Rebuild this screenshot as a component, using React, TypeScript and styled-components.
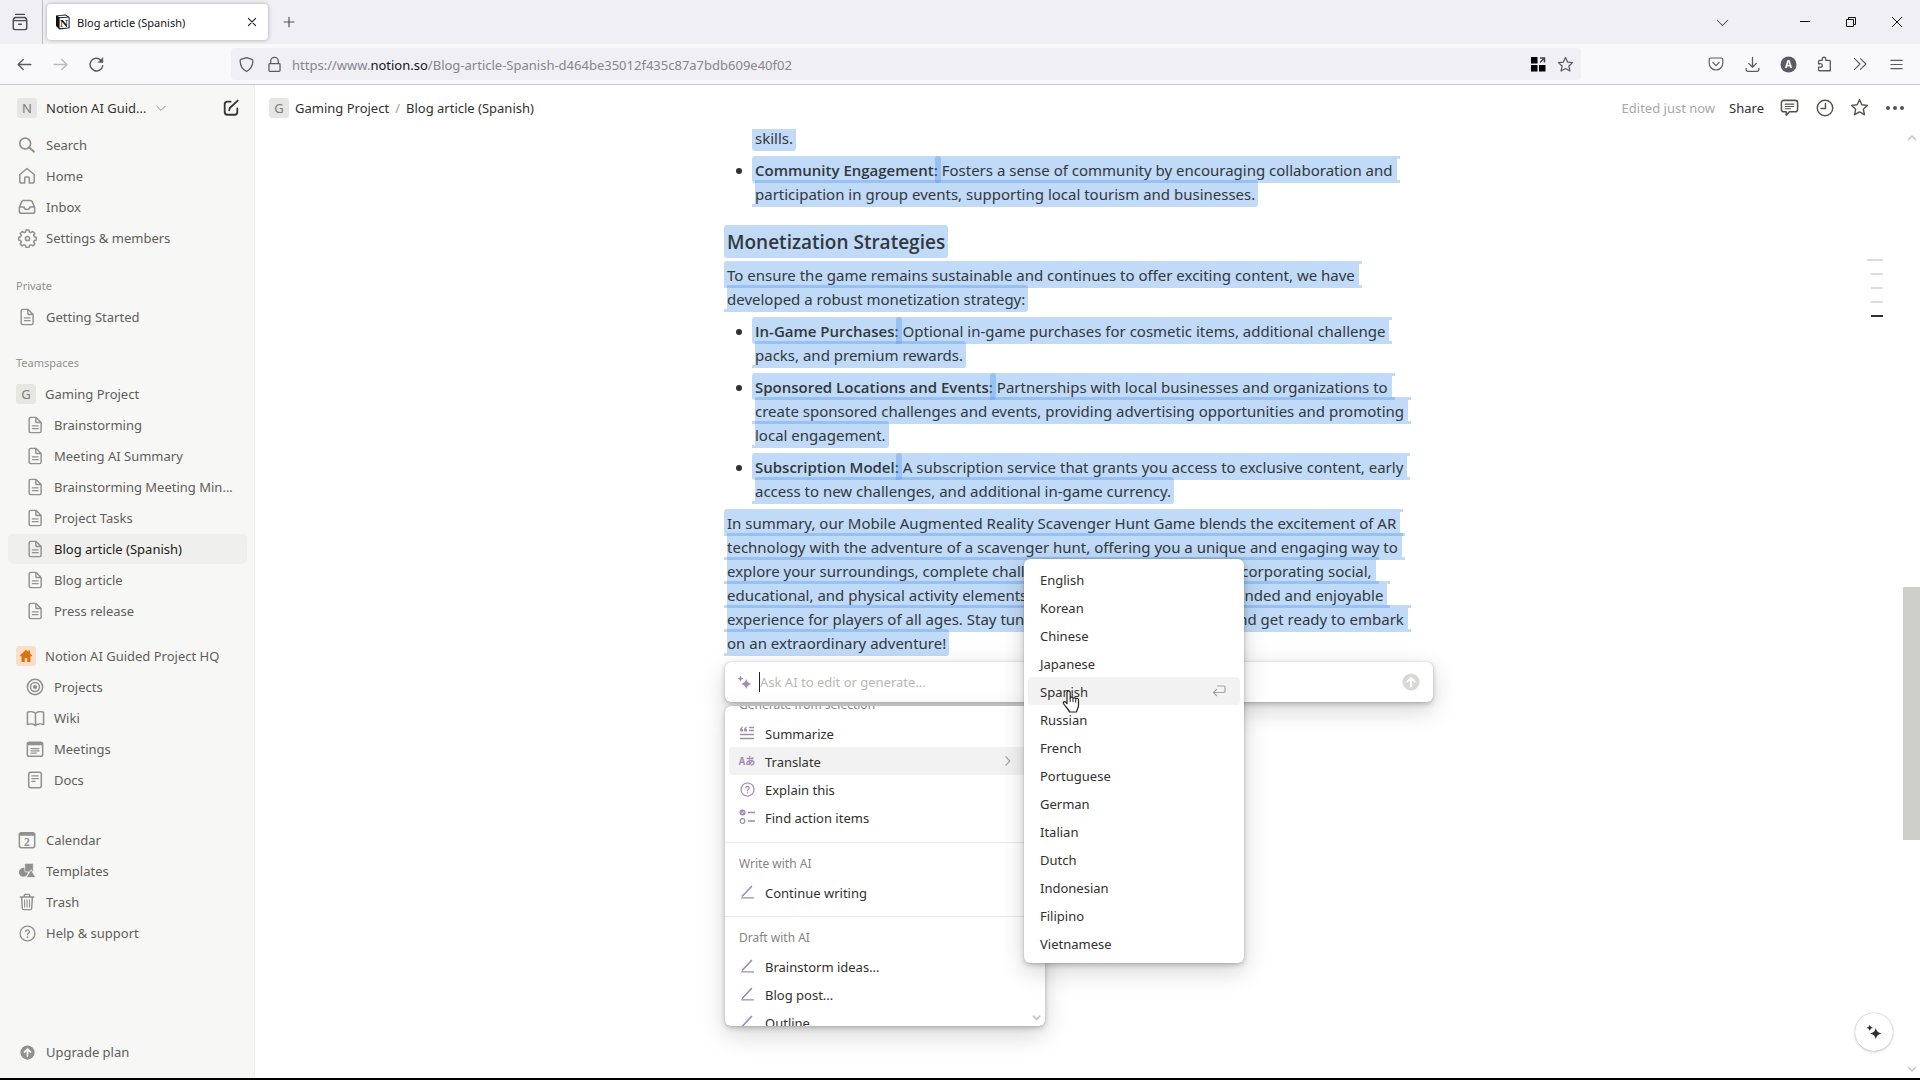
import React from 'react';
import styled, { createGlobalStyle, css } from 'styled-components';

const GlobalStyle = createGlobalStyle`
  *, *::before, *::after { box-sizing: border-box; }
  body {
    margin: 0;
    background: #fff;
    color: #32302c;
    font-family: "Noto Sans", "Open Sans", "Noto Sans CJK JP", sans-serif;
    font-size: 13px;
  }
  button, input { font: inherit; color: inherit; background: none; border: 0; padding: 0; margin: 0; }
  button { cursor: pointer; }
  a { color: inherit; text-decoration: none; }
  ul, p, h3 { margin: 0; padding: 0; list-style: none; }
  svg { display: block; flex: none; }
`;

/* ---------- window ---------- */

const Window = styled.div`
  display: flex;
  flex-direction: column;
  height: 100vh;
  overflow: hidden;
  border-bottom: 2px solid #000;
`;

const TabStrip = styled.header`
  display: flex;
  align-items: stretch;
  height: 44px;
  background: #f0eff4;
  color: #4d4c55;
`;

const IconButton = styled.button<{ $w?: number; $faded?: boolean }>`
  display: inline-flex;
  align-items: center;
  justify-content: center;
  flex: none;
  width: ${p => p.$w ?? 36}px;
  opacity: ${p => (p.$faded ? 0.4 : 1)};
`;

const ViewSlot = styled.div`
  display: flex;
  width: 43px;
  border-right: 1px solid #bdbcc4;
`;

const Tab = styled.div`
  display: flex;
  align-items: center;
  gap: 7px;
  width: 221px;
  margin: 4px 3px 4px 4px;
  padding: 0 4px 0 9px;
  border-radius: 4px;
  background: #fff;
  box-shadow: 0 0 4px rgba(0, 0, 0, 0.3);
  color: #15141a;
  font-size: 11px;
`;

const TabTitle = styled.span`
  flex: 1;
  white-space: nowrap;
`;

const WindowControls = styled.div`
  display: flex;
  gap: 40px;
  margin-left: auto;
  & > div { display: flex; color: #111; }
`;

const Toolbar = styled.div`
  display: flex;
  align-items: stretch;
  gap: 117px;
  height: 41px;
  padding: 0 6px;
  background: #f9f9fb;
  border-bottom: 1px solid #c9c9cf;
  color: #5b5b66;
`;

const ToolGroup = styled.div`
  display: flex;
`;

const AddressBar = styled.div`
  display: flex;
  flex: 1;
  align-items: center;
  gap: 11px;
  margin: 4px 0;
  padding: 0 7px;
  border-radius: 4px;
  background: #f0eff4;
`;

const Address = styled.a`
  flex: 1;
  margin-left: -2px;
  padding-top: 1px;
  color: #85858d;
  white-space: nowrap;
  b { font-weight: 400; color: #15141a; }
`;

const Workspace = styled.div`
  display: flex;
  flex: 1;
  min-height: 0;
`;

/* ---------- sidebar ---------- */

const Sidebar = styled.nav`
  display: flex;
  flex-direction: column;
  flex: none;
  width: 255px;
  padding: 8px 7px 11px 8px;
  background: #f7f7f5;
  border-right: 1px solid #eeeeec;
  color: #5f5e5b;
`;

const SideHeader = styled.div`
  display: flex;
  align-items: center;
  height: 30px;
  margin-bottom: 7px;
  padding-left: 9px;
  color: #373530;
`;

const SwitcherButton = styled.button`
  display: flex;
  flex: 1;
  align-items: center;
  gap: 9px;
  svg { color: #91918e; }
`;

const Badge = styled.span<{ $warm?: boolean }>`
  display: inline-flex;
  align-items: center;
  justify-content: center;
  flex: none;
  width: 20px;
  height: 20px;
  border-radius: 3px;
  background: ${p => (p.$warm ? '#fadec9' : '#e6e7e3')};
  color: #7d7c78;
  line-height: 20px;
`;

const SideList = styled.ul<{ $gap?: number }>`
  display: flex;
  flex-direction: column;
  gap: 1px;
  margin-top: ${p => p.$gap ?? 0}px;
`;

const SideLabel = styled.li`
  padding-left: 8px;
  color: #91918e;
  font-size: 11px;
  line-height: 30px;
`;

const SideLink = styled.a<{ $depth?: number; $active?: boolean }>`
  display: flex;
  align-items: center;
  gap: 9px;
  height: 30px;
  padding-left: ${p => (p.$depth === 0 ? 8 : p.$depth === 2 ? 17 : 9)}px;
  border-radius: 5px;
  white-space: nowrap;
  ${p => p.$active && css`
    background: #efefed;
    color: #1d1b16;
  `}
`;

const SideIcon = styled.span`
  display: inline-flex;
  justify-content: center;
  flex: none;
  width: 20px;
  color: #91918e;
`;

const Spacer = styled.div`
  flex: 1;
`;

/* ---------- page ---------- */

const Page = styled.main`
  position: relative;
  display: flex;
  flex: 1;
  flex-direction: column;
  min-width: 0;
`;

const TopBar = styled.div`
  display: flex;
  align-items: center;
  flex: none;
  height: 44px;
  padding: 1px 8px 0 14px;
`;

const Crumbs = styled.div`
  display: flex;
  flex: 1;
  align-items: center;
  gap: 6px;
  i { font-style: normal; color: #a09f9b; }
`;

const Edited = styled.span`
  margin-right: 14px;
  color: #a9a8a4;
`;

const ShareButton = styled.button`
  margin-right: 8px;
`;

const PageActions = styled.div`
  display: flex;
  color: #55534e;
`;

const ScrollArea = styled.div`
  display: flex;
  flex: 1;
  min-height: 0;
`;

const Document = styled.article`
  flex: 1;
  overflow: hidden;
`;

const Column = styled.div`
  display: flex;
  flex-direction: column;
  gap: 8px;
  width: 708px;
  margin: -3px auto 0;
  padding: 0 2px;
  font-size: 15px;
  color: #32383c;
`;

const Bullet = styled.li<{ $continued?: boolean }>`
  display: flex;
  &::before {
    content: "";
    width: 6px;
    height: 6px;
    margin: 10px 13px 0 9px;
    border-radius: 50%;
    background: ${p => (p.$continued ? 'transparent' : '#32302c')};
  }
`;

const BulletList = styled.ul`
  display: flex;
  flex-direction: column;
  gap: 8px;
`;

const Line = styled.span`
  display: block;
  height: 24px;
  line-height: 24px;
  white-space: pre;
`;

const Heading = styled.h3`
  height: 28px;
  margin-top: 13px;
  font: 600 19px "Open Sans", sans-serif;
  line-height: 30px;
`;

const tint = 'rgba(69, 147, 232, 0.34)';

const Mark = styled.mark<{ $start?: boolean; $end?: boolean }>`
  position: relative;
  display: inline-block;
  vertical-align: top;
  margin: -2px ${p => (p.$end ? '-3px' : '0')} -1px ${p => (p.$start ? '-3px' : '0')};
  padding: 2px ${p => (p.$end ? '3px' : '4px')} 1px ${p => (p.$start ? '3px' : '0')};
  border-radius: ${p => (p.$start ? '3px' : '0')} ${p => (p.$end ? '3px 3px' : '0 0')} ${p => (p.$start && p.$end ? '3px' : '0')};
  background: ${tint};
  color: inherit;

  ${p => !p.$start && css`
    &::before {
      content: "";
      position: absolute;
      bottom: 0;
      left: -3px;
      width: 3px;
      height: 3px;
      background: ${tint};
    }
  `}
  ${p => !p.$end && css`
    &::after {
      content: "";
      position: absolute;
      top: 0;
      right: -3px;
      bottom: 0;
      width: 3px;
      border: solid ${tint};
      border-width: 3px 0;
    }
  `}
`;

const Lead = styled.strong`
  font-family: "Open Sans", sans-serif;
  font-weight: 600;
`;

const Outline = styled.div`
  position: absolute;
  top: 174px;
  right: 37px;
  display: flex;
  flex-direction: column;
  align-items: flex-end;
  gap: 12px;
`;

const OutlineMark = styled.a<{ $wide?: boolean; $on?: boolean }>`
  width: ${p => (p.$wide ? 16 : 12)}px;
  height: 2px;
  background: ${p => (p.$on ? '#32302c' : '#dcdbd9')};
`;

const ScrollTrack = styled.div`
  display: flex;
  flex-direction: column;
  align-items: center;
  width: 17px;
  color: #c9c9c5;
  svg { margin: 4px 0; }
`;

const ScrollThumb = styled.div`
  width: 100%;
  height: 253px;
  background: #cfcfca;
`;

const ScrollSpace = styled.div<{ $grow: number }>`
  flex: ${p => p.$grow};
`;

const FloatingButton = styled.button`
  position: absolute;
  right: 27px;
  bottom: 27px;
  display: flex;
  align-items: center;
  justify-content: center;
  width: 38px;
  height: 38px;
  border-radius: 50%;
  background: #fff;
  box-shadow: 0 0 1px rgba(15, 15, 15, 0.4), 0 1px 3px rgba(15, 15, 15, 0.2);
  color: #32302c;
`;

/* ---------- AI assistant ---------- */

const popShadow = css`
  border-radius: 6px;
  background: #fff;
  box-shadow: 0 0 1px rgba(15, 15, 15, 0.25), 0 2px 5px rgba(15, 15, 15, 0.24), 0 8px 24px rgba(15, 15, 15, 0.18);
`;

const Assistant = styled.div`
  position: relative;
  margin: -1px -2px 0;
  color: #32302c;
  font-size: 13px;
`;

const PromptBar = styled.form`
  ${popShadow}
  display: flex;
  align-items: center;
  height: 40px;
  padding: 0 13px 0 11px;
`;

const PromptInput = styled.input`
  flex: 1;
  height: 20px;
  border-left: 1px solid #222;
  outline: none;
  &::placeholder { color: #b7b9b3; opacity: 1; }
`;

const SendButton = styled.button`
  display: flex;
  color: #d8d8d6;
`;

const ActionMenu = styled.div`
  ${popShadow}
  position: absolute;
  top: 44px;
  left: 0;
  width: 320px;
  height: 320px;
  overflow: hidden;
`;

const ActionScroll = styled.div`
  margin-top: -22px;
`;

const Group = styled.section`
  padding: 6px 4px 10px;
  &:first-child { padding-bottom: 11px; }
  & + & { border-top: 1px solid #e9e9e7; }
`;

const GroupLabel = styled.div`
  padding-left: 10px;
  color: #85847f;
  font-size: 12px;
  line-height: 29px;
`;

const MenuItem = styled.button<{ $active?: boolean; $pad?: number }>`
  display: flex;
  align-items: center;
  width: 100%;
  height: 28px;
  padding: 0 ${p => p.$pad ?? 10}px;
  border-radius: 4px;
  background: ${p => (p.$active ? '#f2f2f2' : 'transparent')};
  text-align: left;
`;

const ItemIcon = styled.span<{ $gap?: number }>`
  display: inline-flex;
  align-items: center;
  justify-content: center;
  width: 16px;
  margin-right: ${p => p.$gap ?? 10}px;
  color: #a08bb5;
`;

const Glyphs = styled.span`
  font: 700 10px/16px "Noto Sans CJK JP", sans-serif;
  white-space: nowrap;
`;

const ItemText = styled.span`
  flex: 1;
  padding-top: 1px;
  white-space: nowrap;
`;

const Trailing = styled.span<{ $inset?: number }>`
  margin-right: ${p => p.$inset ?? 0}px;
  color: #a5a4a0;
`;

const MenuScrollHint = styled.span`
  position: absolute;
  right: 4px;
  bottom: 4px;
  color: #c4c4c0;
`;

const LanguageMenu = styled.div`
  ${popShadow}
  position: absolute;
  top: -103px;
  left: 299px;
  width: 220px;
  padding: 6px 4px;
`;

const Pointer = styled.span`
  position: absolute;
  top: 28px;
  left: 337px;
`;

/* ---------- icons ---------- */

type IconProps = { size?: number; w?: number; box?: string; children: React.ReactNode };

const Stroke = ({ size = 18, w = 1.5, box = '0 0 20 20', children }: IconProps) => (
  <svg width={size} height={size} viewBox={box} fill="none" stroke="currentColor" strokeWidth={w}
    strokeLinecap="round" strokeLinejoin="round" aria-hidden="true">{children}</svg>
);

const ViewIcon = () => <Stroke size={18} w={1.6}><path d="M5 1.5h10M4 5h12M2.500 8.500h15v8a2 2 0 0 1-2 2h-11a2 2 0 0 1-2-2zM2.500 8.500Q2.500 5.500 5 5M17.500 8.500Q17.500 5.500 15 5M8.500 12.500h3" /></Stroke>;
const NotionLogo = () => (
  <svg width="14" height="16" viewBox="0 0 14 16" aria-hidden="true">
    <path d="M0 1.5 9.5.6 13.6 3v11.3L3.4 15.4 0 12z" fill="#111" />
    <path d="M3.6 4.2 12.6 3.6v10l-9 .7z" fill="#fff" />
    <path d="M1.6 2 9.4 1.4 11.6 2.7 3.6 3.2z" fill="#fff" />
    <text x="8.1" y="12.6" fontFamily="Liberation Serif, serif" fontWeight="700" fontSize="11" textAnchor="middle" fill="#111">N</text>
  </svg>
);
const CrossIcon = ({ size = 16 }) => <Stroke size={size} w={1.3}><path d="m5.500 5.500 9 9M14.500 5.500l-9 9" /></Stroke>;
const PlusIcon = () => <Stroke size={16} w={1.4}><path d="M10 4v12M4 10h12" /></Stroke>;
const DownIcon = ({ size = 16, w = 1.8 }) => <Stroke size={size} w={w}><path d="m3 7 7 7 7-7" /></Stroke>;
const UpIcon = ({ size = 16, w = 1.8 }) => <Stroke size={size} w={w}><path d="m3 13 7-7 7 7" /></Stroke>;
const MinimizeIcon = () => <svg width="10" height="10" viewBox="0 0 10 10"><path d="M0 4h10v1H0z" fill="currentColor" /></svg>;
const RestoreIcon = () => <svg width="10" height="10" viewBox="0 0 10 10" fill="none" stroke="currentColor"><path d="M.5 2.5h7v7h-7zM2.5 2.5v-2h7v7h-2" /></svg>;
const CloseIcon = () => <svg width="10" height="10" viewBox="0 0 10 10" fill="none" stroke="currentColor"><path d="m0 0 10 10M10 0 0 10" /></svg>;

const BackIcon = () => <Stroke size={17} w={1.7}><path d="M17.500 10h-15M8.500 4 2.500 10l6 6" /></Stroke>;
const ForwardIcon = () => <Stroke size={17} w={1.7}><path d="M2.500 10h15M11.500 4l6 6-6 6" /></Stroke>;
const ReloadIcon = () => <Stroke size={17} w={1.7}><path d="M17.300 11.500a7.500 7.500 0 1 1-2.200-6.800l2 2" /><path d="M17.500 2v5.500h-5.500z" fill="currentColor" strokeWidth="0.600" /></Stroke>;
const ShieldIcon = () => <Stroke size={17}><path d="M10 1.800 16.5 4c1 .3 1 1.2 1 2-.2 6-3 10-7.5 12.3C5.500 16 2.700 12 2.500 6c0-.8 0-1.700 1-2z" /></Stroke>;
const LockIcon = () => <Stroke size={17}><path d="M5.500 9V6a4.500 4.500 0 0 1 9 0v3M4.500 9h11a1 1 0 0 1 1 1v7a1 1 0 0 1-1 1h-11a1 1 0 0 1-1-1v-7a1 1 0 0 1 1-1z" /></Stroke>;
const ContainersIcon = () => (
  <svg width="16" height="16" viewBox="0 0 16 16" aria-hidden="true">
    <path d="M1 1h6.500v6.500H1zM1 9h6.500v6.500H1zM9 9h6.500v6.500H9z" fill="#000" />
    <path d="M10 2h4.500v4.500M14.300 2.200 10 6.500" fill="none" stroke="#444" strokeWidth="1.500" />
  </svg>
);
const StarIcon = ({ size = 18 }) => <Stroke size={size}><path d="m10 1.800 2.500 5.300 5.800.7-4.300 4 1.200 5.800L10 14.700l-5.200 2.900L6 11.800l-4.300-4 5.800-.7z" /></Stroke>;
const PocketIcon = () => <Stroke size={16}><path d="M3 2.500h14a1.500 1.500 0 0 1 1.500 1.500v5a8.500 8.500 0 0 1-17 0V4A1.500 1.500 0 0 1 3 2.500zM6 8l4 4 4-4" /></Stroke>;
const DownloadIcon = () => <Stroke size={17}><path d="M10 1.500v11.500M5.500 8.700 10 13.200l4.500-4.500M2.500 14.500v1.500a2 2 0 0 0 2 2h11a2 2 0 0 0 2-2v-1.500" /></Stroke>;
const AccountIcon = () => (
  <svg width="17" height="17" viewBox="0 0 17 17" aria-hidden="true">
    <circle cx="8.500" cy="8.500" r="8" fill="#5b5b66" />
    <text x="8.500" y="12" fontFamily="Open Sans, sans-serif" fontWeight="700" fontSize="10" textAnchor="middle" fill="#fff">A</text>
  </svg>
);
const PuzzleIcon = () => <Stroke size={18}><path d="M8 4.500a2 2 0 1 1 4 0V6h4a1 1 0 0 1 1 1v10.500H5a1 1 0 0 1-1-1V13.500h1.500a2 2 0 1 0 0-3.800H4V7a1 1 0 0 1 1-1h3z" /></Stroke>;
const MoreToolsIcon = () => <Stroke size={18} w={1.300}><path d="m4 4 6 6-6 6M10.500 4l6 6-6 6" /></Stroke>;
const MenuIcon = () => <Stroke size={15}><path d="M2.500 4.500h15M2.500 10h15M2.500 15.500h15" /></Stroke>;

const ComposeIcon = () => <Stroke size={18} w={2}><path d="M9.500 3H6a3 3 0 0 0-3 3v8.500a3 3 0 0 0 3 3h8a3 3 0 0 0 3-3V10.500M8 12.500l.7-2.500 8.800-8.300" /></Stroke>;
const SearchIcon = () => <Stroke size={18} w={1.900}><circle cx="8" cy="8.300" r="6" /><path d="m12.500 12.800 5 4.500" strokeWidth="2.400" /></Stroke>;
const HomeIcon = () => <Stroke size={18} w={1.700}><path d="M2 8.300 10 1.700l8 6.600v7.500a2 2 0 0 1-2 2h-3.500V12a1 1 0 0 0-1-1h-3a1 1 0 0 0-1 1v5.800H4a2 2 0 0 1-2-2z" /></Stroke>;
const InboxIcon = () => <Stroke size={18} w={1.700}><path d="M1.500 10.500 4.200 4a2 2 0 0 1 1.800-1.200h8A2 2 0 0 1 15.800 4l2.700 6.500V15a2 2 0 0 1-2 2h-13a2 2 0 0 1-2-2zM1.500 10h5.200c0 2 1.500 2.800 3.300 2.800s3.300-.8 3.300-2.800h5.200" /></Stroke>;
const GearIcon = () => (
  <Stroke size={19} w={1.600}>
    <path d="m8.500 1.300-.5 2.100-1.700.7-1.900-1.200-2.100 2.100 1.200 1.900-.7 1.600-2 .5v3l2 .5.7 1.700-1.200 1.800 2.100 2.100 1.900-1.100 1.700.7.500 2h3l.5-2 1.700-.7 1.900 1.100 2.100-2.100-1.200-1.800.7-1.700 2-.5v-3l-2-.5-.7-1.600 1.200-1.900-2.100-2.100-1.900 1.200-1.700-.7-.5-2.100z" transform="translate(0 -.3)" />
    <circle cx="10" cy="10" r="2.200" />
  </Stroke>
);
const FileIcon = () => <Stroke size={18} w={1.600}><path d="M5 1.500h6L16.800 7.300V17a1.500 1.500 0 0 1-1.500 1.500H5A1.500 1.500 0 0 1 3.500 17V3A1.500 1.500 0 0 1 5 1.500zM11 1.500v4.800a1 1 0 0 0 1 1h4.800" /><path d="M7 11h6.500M7 14h6.500" strokeWidth="1.200" /></Stroke>;
const HouseSolid = () => <svg width="14" height="14" viewBox="0 0 14 14" aria-hidden="true"><path d="M7 .8.8 6.500l1 1L2.500 7v6h3.300V9h2.400v4h3.300V7l.7.500 1-1L11 4.500V1.500H9.300V3z" fill="#d9730d" /></svg>;
const TargetIcon = () => <Stroke size={18} w={1.700}><circle cx="10" cy="10" r="8.500" /><circle cx="10" cy="10" r="5" /><circle cx="10" cy="10" r="1.500" fill="currentColor" /></Stroke>;
const BookIcon = () => <Stroke size={19} w={1.600}><path d="M10 4.500C8 2.800 4 2.500 1.500 3.500v12.800C4 15.300 8 15.600 10 17.300c2-1.700 6-2 8.500-1V3.500C16 2.500 12 2.800 10 4.500zM10 4.500v12.500" /></Stroke>;
const MeetingIcon = () => <Stroke size={18} w={1.700}><rect x="1.500" y="2.500" width="17" height="15.500" rx="2" /><path d="M2.500 4.300h15" strokeWidth="3" /><path d="M5.500 9.500h9M5.500 12h9M5.500 14.500h6" strokeWidth="1.300" /></Stroke>;
const NoteIcon = () => <Stroke size={18} w={1.700}><rect x="3" y="1.500" width="14" height="17" rx="2" /><path d="M6.500 5.500h7M6.500 8.500h7M6.500 11.500h3.500" strokeWidth="1.300" /></Stroke>;
const CalendarIcon = () => (
  <Stroke size={18} w={1.700}>
    <rect x="1.500" y="2" width="17" height="16.500" rx="2" /><path d="M2.500 3.800h15" strokeWidth="3" />
    <text x="10" y="16.200" fontFamily="Liberation Serif, serif" fontWeight="700" fontSize="13" textAnchor="middle" fill="currentColor" stroke="none">2</text>
  </Stroke>
);
const ShapesIcon = () => (
  <svg width="18" height="18" viewBox="0 0 20 20" fill="currentColor" aria-hidden="true">
    <circle cx="6" cy="11.500" r="5" />
    <rect x="7.500" y="1.500" width="9.500" height="9.500" rx="1" stroke="#f7f7f5" strokeWidth="0.800" />
    <path d="m14.500 8.500 5.200 8.700H9.300z" stroke="#f7f7f5" strokeWidth="0.800" />
  </svg>
);
const TrashIcon = () => <Stroke size={18} w={1.600}><path d="M2.500 4.500h15M7 4.200V2.500a1 1 0 0 1 1-1h4a1 1 0 0 1 1 1v1.700M4 4.700l.8 12.300a1.500 1.500 0 0 0 1.500 1.500h7.400a1.500 1.500 0 0 0 1.500-1.500L16 4.700" /><path d="M7.300 7.500v8M10 7.500v8M12.700 7.500v8" strokeWidth="1.200" /></Stroke>;
const HelpIcon = ({ size = 17 }) => <Stroke size={size} w={1.600}><circle cx="10" cy="10" r="8.700" /><path d="M7.800 8a2.200 2.200 0 1 1 3.300 1.900c-.7.400-1.100.8-1.100 1.600" /><path d="M10 14.200v.1" strokeWidth="2" /></Stroke>;
const UpCircle = ({ size = 15 }) => <svg width={size} height={size} viewBox="0 0 20 20" aria-hidden="true"><circle cx="10" cy="10" r="9.500" fill="currentColor" /><path d="M10 15V6M6 9.500l4-4 4 4" fill="none" stroke="#fff" strokeWidth="2.200" strokeLinecap="round" strokeLinejoin="round" /></svg>;

const CommentIcon = () => <Stroke size={19} w={1.600}><path d="M4 2.500h12A2.500 2.500 0 0 1 18.500 5v7a2.500 2.500 0 0 1-2.500 2.500h-6L6.500 18v-3.500H4A2.500 2.500 0 0 1 1.500 12V5A2.500 2.500 0 0 1 4 2.500z" /><path d="M5.500 6.500h9M5.500 9h9M5.500 11.300h5.500" strokeWidth="1.200" /></Stroke>;
const ClockIcon = () => <Stroke size={18} w={1.600}><circle cx="10" cy="10" r="8.600" /><path d="M10.500 5v5.500H5.500" /></Stroke>;
const DotsIcon = () => <svg width="18" height="18" viewBox="0 0 18 18" fill="currentColor" aria-hidden="true"><circle cx="2" cy="9" r="2" /><circle cx="9" cy="9" r="2" /><circle cx="16" cy="9" r="2" /></svg>;
const SparkleIcon = ({ size = 16 }) => <svg width={size} height={size} viewBox="0 0 16 16" fill="currentColor" aria-hidden="true"><path d="M9.800 4q.9 4.700 5.700 5.500-4.800.8-5.700 5.500-.9-4.700-5.700-5.500 4.800-.8 5.700-5.500zM3.700.8q.5 2.600 3.200 3-2.700.4-3.200 3-.5-2.600-3.200-3 2.700-.4 3.200-3z" /></svg>;
const SummaryIcon = () => (
  <svg width="16" height="16" viewBox="0 0 16 16" fill="none" stroke="currentColor" aria-hidden="true">
    <path d="M10 2.500h5M10 5.500h5M1 9.500h14M1 13.500h14" strokeWidth="1.400" />
    <path d="M4.300 1.500Q1 2.300 1 5a1.600 1.600 0 1 0 1.700-1.500Q3 2.500 4.300 2zM8.300 1.500Q5 2.300 5 5a1.600 1.600 0 1 0 1.700-1.500Q7 2.500 8.300 2z" fill="currentColor" stroke="none" />
  </svg>
);
const ChecklistIcon = () => (
  <svg width="16" height="16" viewBox="0 0 16 16" fill="none" stroke="currentColor" aria-hidden="true">
    <circle cx="3.500" cy="3.500" r="3" fill="currentColor" stroke="none" /><path d="m2.200 3.600 1 1L5 2.400" stroke="#fff" strokeWidth="0.900" />
    <circle cx="3.500" cy="12" r="2.300" strokeWidth="1.200" /><path d="M9 3.500h7M9 12h7" strokeWidth="1.400" />
  </svg>
);
const PenIcon = () => <svg width="15" height="15" viewBox="0 0 15 15" fill="none" stroke="currentColor" strokeLinecap="round" aria-hidden="true"><path d="M11.500 1.500 2.500 11" strokeWidth="1.700" /><path d="M1.500 12.800h12" strokeWidth="1.300" /></svg>;
const ChevronRight = () => <Stroke size={12} w={2}><path d="m6.500 3 6.500 7-6.500 7" /></Stroke>;
const ReturnIcon = () => <svg width="14" height="14" viewBox="0 0 14 14" fill="none" stroke="currentColor" strokeWidth="1.200" strokeLinecap="round" strokeLinejoin="round" aria-hidden="true"><path d="M5.500 2H12q1 0 1 1v4.500q0 1-1 1H1.500M4.500 5.500l-3 3 3 3" /></svg>;
const HandIcon = () => (
  <svg width="18" height="24" viewBox="0 0 18 24" aria-hidden="true">
    <path d="M5 2.500a1.600 1.600 0 0 1 3.200 0V8a1.500 1.500 0 0 1 2.800.5 1.500 1.500 0 0 1 2.700.7 1.500 1.500 0 0 1 2.800 1V15c0 3-1.500 4.500-2 7H7.500C6.500 19 3.500 17 1.500 13.500c-.7-1.400 1-2.500 2.200-1.300L5 13.700z" fill="#fff" stroke="#222" strokeWidth="1.200" strokeLinejoin="round" />
    <path d="M8.200 8v4M11 9v3.200M13.700 10v2.500" stroke="#222" strokeWidth="1" />
  </svg>
);

/* ---------- data ---------- */

const mainLinks: [string, React.ReactNode][] = [
  ['Search', <SearchIcon />], ['Home', <HomeIcon />], ['Inbox', <InboxIcon />], ['Settings & members', <GearIcon />],
];
const projectPages = ['Brainstorming', 'Meeting AI Summary', 'Brainstorming Meeting Min...', 'Project Tasks', 'Blog article (Spanish)', 'Blog article', 'Press release'];
const hqPages: [string, React.ReactNode][] = [
  ['Projects', <TargetIcon />], ['Wiki', <BookIcon />], ['Meetings', <MeetingIcon />], ['Docs', <NoteIcon />],
];
const utilityLinks: [string, React.ReactNode][] = [
  ['Calendar', <CalendarIcon />], ['Templates', <ShapesIcon />], ['Trash', <TrashIcon />], ['Help & support', <HelpIcon />],
];
const languages = ['English', 'Korean', 'Chinese', 'Japanese', 'Spanish', 'Russian', 'French', 'Portuguese', 'German', 'Italian', 'Dutch', 'Indonesian', 'Filipino', 'Vietnamese'];

const bullets: { lead: string; lines: string[] }[] = [
  { lead: 'Community Engagement:', lines: [' Fosters a sense of community by encouraging collaboration and', 'participation in group events, supporting local tourism and businesses.'] },
];
const strategies: { lead: string; lines: string[] }[] = [
  { lead: 'In-Game Purchases:', lines: [' Optional in-game purchases for cosmetic items, additional challenge', 'packs, and premium rewards.'] },
  { lead: 'Sponsored Locations and Events:', lines: [' Partnerships with local businesses and organizations to', 'create sponsored challenges and events, providing advertising opportunities and promoting', 'local engagement.'] },
  { lead: 'Subscription Model:', lines: [' A subscription service that grants you access to exclusive content, early', 'access to new challenges, and additional in-game currency.'] },
];
const intro = ['To ensure the game remains sustainable and continues to offer exciting content, we have', 'developed a robust monetization strategy:'];
const summary = [
  'In summary, our Mobile Augmented Reality Scavenger Hunt Game blends the excitement of AR',
  'technology with the adventure of a scavenger hunt, offering you a unique and engaging way to',
  'explore your surroundings, complete challenges, and earn rewards. By incorporating social,',
  'educational, and physical activity elements, the game promises a well-rounded and enjoyable',
  'experience for players of all ages. Stay tuned for more project updates, and get ready to embark',
  'on an extraordinary adventure!',
];

/* ---------- parts ---------- */

const SelectedText = ({ lines, lead }: { lines: string[]; lead?: string }) => (
  <p>
    {lines.map((text, i) => (
      <Line key={text}>
        {i === 0 && lead && <Mark $start $end><Lead>{lead}</Lead></Mark>}
        <Mark $start={i === 0} $end={i === lines.length - 1}>{text}</Mark>
      </Line>
    ))}
  </p>
);

const SelectedBullets = ({ items }: { items: typeof bullets }) => (
  <BulletList>
    {items.map(b => <Bullet key={b.lead}><SelectedText {...b} /></Bullet>)}
  </BulletList>
);

const SideRow = ({ label, icon, depth, active }: { label: string; icon: React.ReactNode; depth?: number; active?: boolean }) => (
  <li>
    <SideLink href="#" $depth={depth} $active={active}>
      {depth === 0 ? icon : <SideIcon>{icon}</SideIcon>}
      {label}
    </SideLink>
  </li>
);

const ActionItem = ({ icon, label, active }: { icon: React.ReactNode; label: string; active?: boolean }) => (
  <MenuItem type="button" $active={active}>
    <ItemIcon>{icon}</ItemIcon>
    <ItemText>{label}</ItemText>
    {active && <Trailing $inset={17}><ChevronRight /></Trailing>}
  </MenuItem>
);

const BrowserChrome = () => (
  <>
    <TabStrip>
      <ViewSlot><IconButton $w={40} aria-label="Recent browsing"><ViewIcon /></IconButton></ViewSlot>
      <Tab>
        <NotionLogo />
        <TabTitle>Blog article (Spanish)</TabTitle>
        <IconButton $w={24} aria-label="Close tab"><CrossIcon /></IconButton>
      </Tab>
      <IconButton aria-label="New tab"><PlusIcon /></IconButton>
      <WindowControls>
        <IconButton $w={40} aria-label="List all tabs"><DownIcon size={15} w={1.400} /></IconButton>
        <div>
          <IconButton $w={46} aria-label="Minimize"><MinimizeIcon /></IconButton>
          <IconButton $w={46} aria-label="Restore"><RestoreIcon /></IconButton>
          <IconButton $w={46} aria-label="Close"><CloseIcon /></IconButton>
        </div>
      </WindowControls>
    </TabStrip>
    <Toolbar>
      <ToolGroup>
        <IconButton aria-label="Back"><BackIcon /></IconButton>
        <IconButton aria-label="Forward" $faded><ForwardIcon /></IconButton>
        <IconButton aria-label="Reload"><ReloadIcon /></IconButton>
      </ToolGroup>
      <AddressBar>
        <ShieldIcon />
        <LockIcon />
        <Address href="#">https://www.<b>notion.so</b>/Blog-article-Spanish-d464be35012f435c87a7bdb609e40f02</Address>
        <ContainersIcon />
        <StarIcon size={17} />
      </AddressBar>
      <ToolGroup>
        <IconButton aria-label="Save to Pocket"><PocketIcon /></IconButton>
        <IconButton aria-label="Downloads"><DownloadIcon /></IconButton>
        <IconButton aria-label="Account"><AccountIcon /></IconButton>
        <IconButton aria-label="Extensions"><PuzzleIcon /></IconButton>
        <IconButton aria-label="More tools"><MoreToolsIcon /></IconButton>
        <IconButton aria-label="Menu"><MenuIcon /></IconButton>
      </ToolGroup>
    </Toolbar>
  </>
);

const SideNav = () => (
  <Sidebar>
    <SideHeader>
      <SwitcherButton><Badge>N</Badge>Notion AI Guid...<DownIcon size={12} w={1.600} /></SwitcherButton>
      <IconButton $w={32} aria-label="New page"><ComposeIcon /></IconButton>
    </SideHeader>
    <SideList>
      {mainLinks.map(([label, icon]) => <SideRow key={label} label={label} icon={icon} />)}
    </SideList>
    <SideList $gap={18}>
      <SideLabel>Private</SideLabel>
      <SideRow label="Getting Started" icon={<FileIcon />} />
    </SideList>
    <SideList $gap={16}>
      <SideLabel>Teamspaces</SideLabel>
      <SideRow label="Gaming Project" icon={<Badge>G</Badge>} depth={0} />
      {projectPages.map(label => (
        <SideRow key={label} label={label} icon={<FileIcon />} depth={2} active={label === 'Blog article (Spanish)'} />
      ))}
    </SideList>
    <SideList $gap={15}>
      <SideRow label="Notion AI Guided Project HQ" icon={<Badge $warm><HouseSolid /></Badge>} depth={0} />
      {hqPages.map(([label, icon]) => <SideRow key={label} label={label} icon={icon} depth={2} />)}
    </SideList>
    <SideList $gap={30}>
      {utilityLinks.map(([label, icon]) => <SideRow key={label} label={label} icon={icon} />)}
    </SideList>
    <Spacer />
    <SideList>
      <SideRow label="Upgrade plan" icon={<UpCircle />} />
    </SideList>
  </Sidebar>
);

const AiAssistant = () => (
  <Assistant>
    <ActionMenu role="menu">
      <ActionScroll>
        <Group>
          <GroupLabel>Generate from selection</GroupLabel>
          <ActionItem icon={<SummaryIcon />} label="Summarize" />
          <ActionItem icon={<Glyphs>Aあ</Glyphs>} label="Translate" active />
          <ActionItem icon={<HelpIcon size={15} />} label="Explain this" />
          <ActionItem icon={<ChecklistIcon />} label="Find action items" />
        </Group>
        <Group>
          <GroupLabel>Write with AI</GroupLabel>
          <ActionItem icon={<PenIcon />} label="Continue writing" />
        </Group>
        <Group>
          <GroupLabel>Draft with AI</GroupLabel>
          <ActionItem icon={<PenIcon />} label="Brainstorm ideas..." />
          <ActionItem icon={<PenIcon />} label="Blog post..." />
          <ActionItem icon={<PenIcon />} label="Outline..." />
        </Group>
      </ActionScroll>
      <MenuScrollHint><DownIcon size={9} w={4} /></MenuScrollHint>
    </ActionMenu>
    <PromptBar>
      <ItemIcon $gap={7}><SparkleIcon size={15} /></ItemIcon>
      <PromptInput aria-label="Ask AI" placeholder="Ask AI to edit or generate..." />
      <SendButton type="button" aria-label="Send"><UpCircle size={18} /></SendButton>
    </PromptBar>
    <LanguageMenu role="menu">
      {languages.map(name => (
        <MenuItem key={name} type="button" $pad={12} $active={name === 'Spanish'}>
          <ItemText>{name}</ItemText>
          {name === 'Spanish' && <Trailing $inset={2}><ReturnIcon /></Trailing>}
        </MenuItem>
      ))}
    </LanguageMenu>
    <Pointer><HandIcon /></Pointer>
  </Assistant>
);

export default function App() {
  return (
    <Window>
      <GlobalStyle />
      <BrowserChrome />
      <Workspace>
        <SideNav />
        <Page>
          <TopBar>
            <Crumbs>
              <Badge>G</Badge>
              <span>Gaming Project</span>
              <i>/</i>
              <span>Blog article (Spanish)</span>
            </Crumbs>
            <Edited>Edited just now</Edited>
            <ShareButton>Share</ShareButton>
            <PageActions>
              <IconButton $w={35} aria-label="Comments"><CommentIcon /></IconButton>
              <IconButton $w={35} aria-label="History"><ClockIcon /></IconButton>
              <IconButton $w={35} aria-label="Favorite"><StarIcon size={19} /></IconButton>
              <IconButton $w={35} aria-label="More"><DotsIcon /></IconButton>
            </PageActions>
          </TopBar>
          <ScrollArea>
            <Document>
              <Column>
                <BulletList>
                  <Bullet $continued><SelectedText lines={['skills.']} /></Bullet>
                </BulletList>
                <SelectedBullets items={bullets} />
                <Heading><Mark $start $end>Monetization Strategies</Mark></Heading>
                <SelectedText lines={intro} />
                <SelectedBullets items={strategies} />
                <SelectedText lines={summary} />
                <AiAssistant />
              </Column>
            </Document>
            <ScrollTrack>
              <UpIcon size={10} w={3.500} />
              <ScrollSpace $grow={2} />
              <ScrollThumb />
              <ScrollSpace $grow={1} />
              <DownIcon size={10} w={3.500} />
            </ScrollTrack>
          </ScrollArea>
          <Outline>
            <OutlineMark href="#" $wide />
            <OutlineMark href="#" />
            <OutlineMark href="#" />
            <OutlineMark href="#" />
            <OutlineMark href="#" $on />
          </Outline>
          <FloatingButton aria-label="Ask AI"><SparkleIcon /></FloatingButton>
        </Page>
      </Workspace>
    </Window>
  );
}
